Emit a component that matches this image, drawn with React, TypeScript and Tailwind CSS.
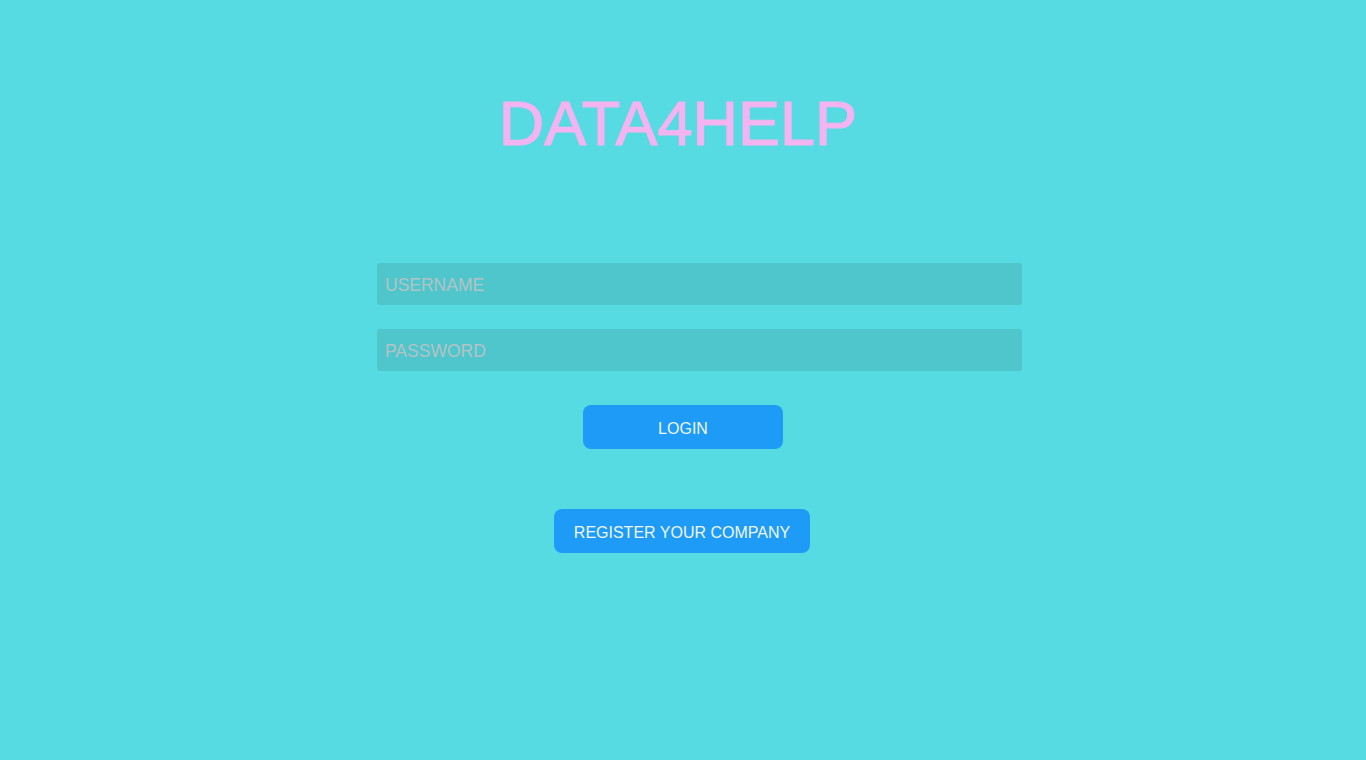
export default function App() {
  return (
    <div
      className="min-h-screen w-full bg-[#55dbe1] pt-[92px]"
      style={{ fontFamily: '"Liberation Sans", Arial, sans-serif' }}
    >
      <h1 className="text-center text-[63px] leading-none text-[#f4b3f1] [-webkit-text-stroke:1.2px_#f4b3f1] pr-[10px]">
        DATA4HELP
      </h1>

      <form className="mt-[108px] flex flex-col items-center" onSubmit={(e) => e.preventDefault()}>
        <div className="mx-auto w-[678px] pl-[33px] flex flex-col gap-6">
          <input
            type="text"
            placeholder="USERNAME"
            className="h-[42px] w-full rounded-[3px] bg-[#4fc6cc] px-2 pt-[2px] text-[17.5px] text-gray-700 placeholder:text-[#b4c3c5] outline-none"
          />
          <input
            type="password"
            placeholder="PASSWORD"
            className="h-[42px] w-full rounded-[3px] bg-[#4fc6cc] px-2 pt-[2px] text-[17.5px] text-gray-700 placeholder:text-[#b4c3c5] outline-none"
          />
        </div>

        <button
          type="submit"
          className="mt-[34px] h-[44px] w-[200px] rounded-lg bg-[#1e9bf7] pt-1 text-[16px] text-[#eef7ff]"
        >
          LOGIN
        </button>

        <button
          type="button"
          className="mt-[60px] h-[44px] rounded-lg bg-[#1e9bf7] px-[20px] pt-1 text-[16px] text-[#eef7ff] -translate-x-px"
        >
          REGISTER YOUR COMPANY
        </button>
      </form>
    </div>
  );
}
